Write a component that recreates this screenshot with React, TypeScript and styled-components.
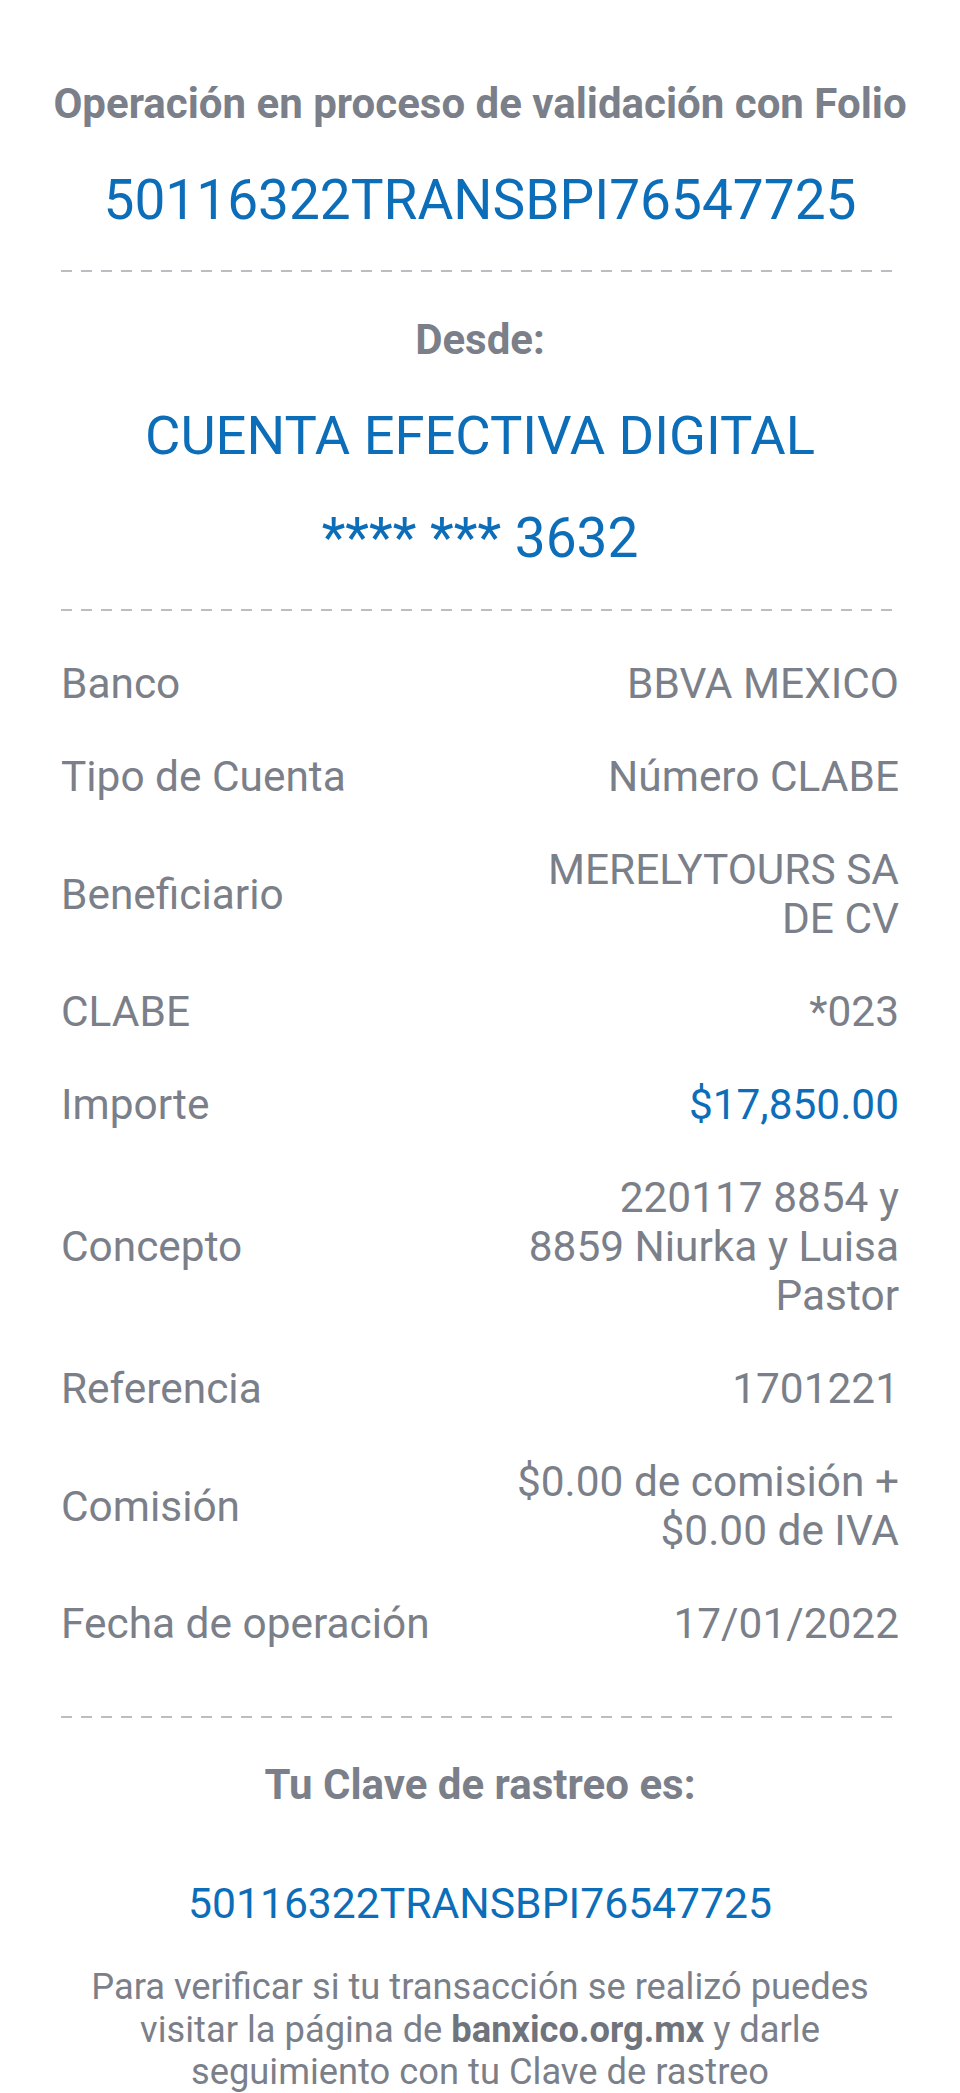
import styled, { createGlobalStyle } from 'styled-components';

const GlobalStyle = createGlobalStyle`
  body {
    margin: 0;
    background: #ffffff;
    font-family: Roboto, 'Liberation Sans', sans-serif;
  }
`;

// value lines are broken the way the receipt shows them
const rows = [
  { label: 'Banco', value: ['BBVA MEXICO'] },
  { label: 'Tipo de Cuenta', value: ['Número CLABE'] },
  { label: 'Beneficiario', value: ['MERELYTOURS SA', 'DE CV'] },
  { label: 'CLABE', value: ['*023'] },
  { label: 'Importe', value: ['$17,850.00'], accent: true },
  { label: 'Concepto', value: ['220117 8854 y', '8859 Niurka y Luisa', 'Pastor'] },
  { label: 'Referencia', value: ['1701221'] },
  { label: 'Comisión', value: ['$0.00 de comisión +', '$0.00 de IVA'] },
  { label: 'Fecha de operación', value: ['17/01/2022'] },
];

const folio = '50116322TRANSBPI76547725';

const Page = styled.main`
  padding: 0 61px;
  color: #7b7f89;
  text-align: center;
`;

const Title = styled.h1<{ $top: number }>`
  margin: ${(p) => p.$top}px -61px 0;
  font-size: 42px;
  line-height: 50px;
  font-weight: 700;
  color: #7b7f89;
  white-space: nowrap;
`;

const BigBlue = styled.div<{ $top: number; $size?: number }>`
  margin-top: ${(p) => p.$top}px;
  font-size: ${(p) => p.$size ?? 55}px;
  line-height: 64px;
  color: #0c6db8;
`;

const Dashes = styled.div<{ $top: number }>`
  margin-top: ${(p) => p.$top}px;
  height: 2px;
  background-image: repeating-linear-gradient(
    to right,
    #babdc2 0,
    #babdc2 11px,
    transparent 11px,
    transparent 20px
  );
`;

const Details = styled.div`
  margin-top: 26px;
  display: flex;
  flex-direction: column;
`;

const Row = styled.div`
  display: flex;
  align-items: center;
  justify-content: space-between;
  padding: 22px 0;
  font-size: 42.4px;
  line-height: 49px;
`;

const Label = styled.span`
  text-align: left;
  white-space: nowrap;
`;

const Value = styled.span<{ $accent?: boolean }>`
  display: flex;
  flex-direction: column;
  align-items: flex-end;
  white-space: nowrap;
  color: ${(p) => (p.$accent ? '#0c6db8' : '#7b7f89')};
`;

const Clave = styled.div`
  margin-top: 68px;
  font-size: 42.67px;
  line-height: 50px;
  color: #0c6db8;
`;

const Note = styled.p`
  margin: 38px 0 0;
  padding: 0 10px;
  font-size: 36.3px;
  line-height: 42.5px;
  color: #7b7f89;

  b {
    font-weight: 700;
    color: #6f737c;
  }
`;

export default function App() {
  return (
    <>
      <GlobalStyle />
      <Page>
        <Title $top={79}>Operación en proceso de validación con Folio</Title>
        <BigBlue $top={39}>{folio}</BigBlue>
        <Dashes $top={38} />
        <Title $top={43}>Desde:</Title>
        <BigBlue $top={39} $size={54.3}>CUENTA EFECTIVA DIGITAL</BigBlue>
        <BigBlue $top={38}>**** *** 3632</BigBlue>
        <Dashes $top={39} />
        <Details>
          {rows.map((row) => (
            <Row key={row.label}>
              <Label>{row.label}</Label>
              <Value $accent={row.accent}>
                {row.value.map((line) => (
                  <span key={line}>{line}</span>
                ))}
              </Value>
            </Row>
          ))}
        </Details>
        <Dashes $top={46} />
        <Title $top={42}>Tu Clave de rastreo es:</Title>
        <Clave>{folio}</Clave>
        <Note>
          Para verificar si tu transacción se realizó puedes visitar la página de <b>banxico.org.mx</b> y darle
          seguimiento con tu Clave de rastreo
        </Note>
      </Page>
    </>
  );
}
